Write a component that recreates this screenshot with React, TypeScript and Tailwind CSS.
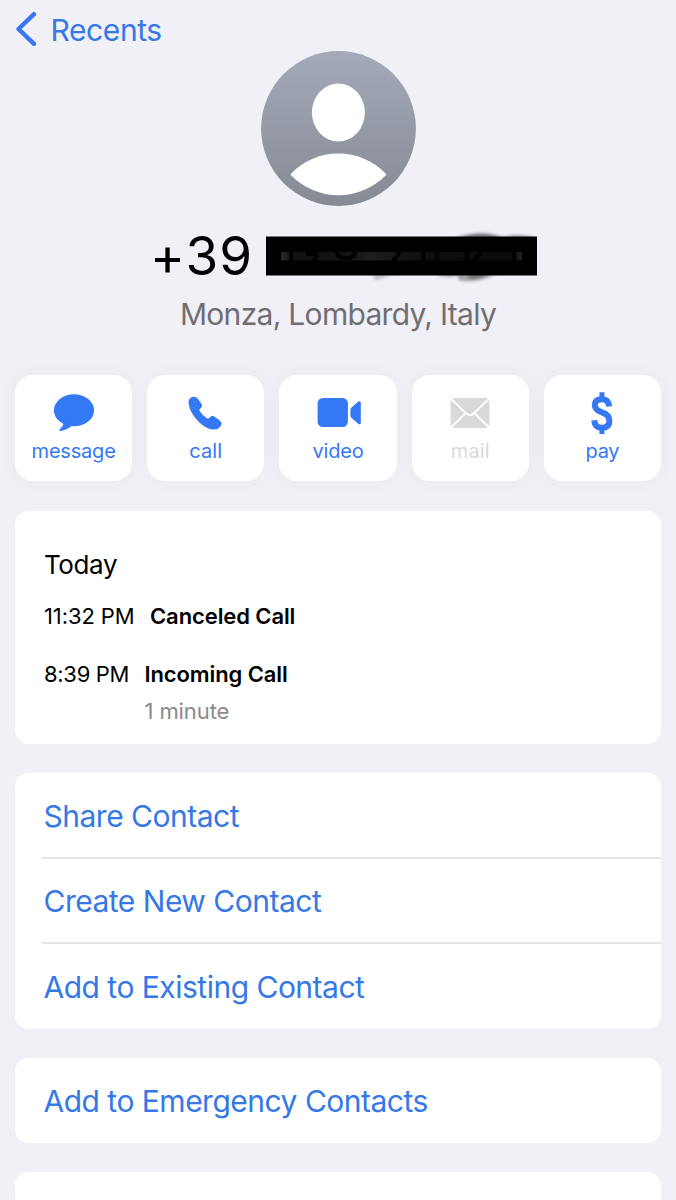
import type { ReactNode } from 'react';
import clsx from 'clsx';

interface ActionButtonProps {
  label: string;
  labelClass?: string;
  disabled?: boolean;
  children: ReactNode;
}

function ActionButton({ label, labelClass, disabled, children }: ActionButtonProps) {
  return (
    <button
      disabled={disabled}
      className={clsx(
        'flex h-[106px] flex-col items-center rounded-[18px] bg-white pt-[14px] shadow-[0_0_20px_rgba(0,0,0,0.035)]',
        disabled ? 'text-[#d9d9d9]' : 'text-[#3578f6]'
      )}
    >
      <svg className="size-12" viewBox="0 0 48 48" fill="currentColor">
        {children}
      </svg>
      <span className={clsx('mt-0.5 text-[20px] leading-6', labelClass)}>{label}</span>
    </button>
  );
}

interface ActionRowProps {
  label: string;
  className?: string;
  divider?: boolean;
}

function ActionRow({ label, className, divider }: ActionRowProps) {
  return (
    <li
      className={clsx(
        'ml-[27px] flex items-center pl-[1.5px]',
        divider && 'border-b-2 border-[#e6e6e7]',
        className
      )}
    >
      <button className="text-[30px] leading-9 tracking-[-0.5px] text-[#3578e6]">{label}</button>
    </li>
  );
}

function Avatar() {
  return (
    <svg className="size-[155px]" viewBox="0 0 155 155">
      <defs>
        <linearGradient id="avatar" x1="0" y1="0" x2="0" y2="1">
          <stop offset="0" stopColor="#a5aab9" />
          <stop offset="1" stopColor="#858a93" />
        </linearGradient>
      </defs>
      <circle cx="77.5" cy="77.5" r="77.4" fill="url(#avatar)" />
      <ellipse cx="77.4" cy="61.5" rx="26.5" ry="29" fill="#fff" />
      <path
        d="M30.2 122.4 A66 66 0 0 1 124.6 122.4 Q125.6 123.4 124.6 124.4 A66 66 0 0 1 30.2 124.4 Q29.2 123.4 30.2 122.4Z"
        fill="#fff"
      />
    </svg>
  );
}

// Blacked out part of the phone number, with the marker strokes around it
function RedactedNumber() {
  return (
    <svg className="h-[60px] w-[280px]" viewBox="0 0 280 60">
      <defs>
        <filter id="smudge" x="-20%" y="-60%" width="140%" height="220%">
          <feGaussianBlur stdDeviation="1.5" />
        </filter>
        <linearGradient id="strip">
          <stop offset="0" stopColor="#2c2c2c" />
          <stop offset="0.05" stopColor="#111" />
          <stop offset="0.3" stopColor="#141414" />
          <stop offset="0.36" stopColor="#1e1e1e" />
          <stop offset="0.6" stopColor="#0e0e0e" />
          <stop offset="0.96" stopColor="#0b0b0b" />
          <stop offset="1" stopColor="#222" />
        </linearGradient>
      </defs>
      <g filter="url(#smudge)">
        <path d="M190 12 Q216 3 238 12Z" fill="#333" opacity=".7" />
        <path d="M234 12 Q254 6 269 12Z" fill="#333" opacity=".5" />
        <path d="M107 48 L128 48 L111 54 Q107 55 108 51Z" fill="#555" opacity=".3" />
        <path d="M172 48 L200 48 Q184 53 172 50Z" fill="#444" opacity=".35" />
        <path d="M190 48 L230 48 Q212 57 196 55 Q190 54 193 51Z" fill="#444" opacity=".45" />
        <path d="M202 48 L224 48 Q210 54 202 52Z" fill="#222" opacity=".4" />
      </g>
      <rect y="10.5" width="271" height="39" fill="#000" />
      <rect x="15" y="26" width="241" height="8.5" fill="url(#strip)" />
      <g fill="none" stroke="#000" strokeWidth="4">
        <path d="M25 26v9M40 28h10q2 3-2 7M71 26q0 6 9 6t9-6" />
        <path d="M134 26l-7 9M157 26v9M171 26v9M201 26v9M215 26l-7 9M248 26v9" />
      </g>
    </svg>
  );
}

export default function App() {
  return (
    <div className="flex h-[1200px] w-full flex-col overflow-hidden bg-[#f1f0f6] font-['Inter','Liberation_Sans',sans-serif] text-black">
      <header className="flex h-[51px] shrink-0 items-center pt-[7px] pl-4 text-[#3578e6]">
        <svg className="h-[34px] w-[20px]" viewBox="0 0 20 34" fill="none">
          <path d="M18 2.2 L2.5 17 L18 31.8" stroke="#3578f6" strokeWidth="4.4" strokeLinecap="round" strokeLinejoin="round" />
        </svg>
        <button className="mt-px ml-[14.5px] text-[30px] leading-9 tracking-[-0.4px]">Recents</button>
      </header>

      <section className="flex shrink-0 flex-col items-center">
        <Avatar />
        <div className="mt-5 flex h-[60px] w-full pl-[150px]">
          <h1 className="w-[116px] text-[53px] leading-[60px] tracking-[1px] whitespace-nowrap">+39</h1>
          <RedactedNumber />
        </div>
        <p className="mt-[10px] text-[30px] leading-9 tracking-[-0.7px] text-[#6f6f73]">Monza, Lombardy, Italy</p>
      </section>

      <main className="px-[15px]">
        <div className="mt-[43px] grid grid-cols-5 gap-[15px]">
          <ActionButton label="message" labelClass="tracking-[-0.2px]">
            <ellipse cx="24" cy="21.3" rx="20.1" ry="16" />
            <path d="M14 33 Q13.5 37 10 40 Q8.6 42.3 11.3 42 Q17 41 22.5 36.5Z" />
          </ActionButton>
          <ActionButton label="call" labelClass="tracking-[0.1px]">
            <path d="M11.4 7.8 Q14 7.2 15.6 9.4 L19.6 15 Q20.7 16.8 19.3 18.4 L17.8 20 Q17 21 17.8 22.3 Q20.6 26.6 25 29.3 Q26 29.9 27 29 L28.8 27.4 Q30.3 26.2 32 27.3 L37.8 31.4 Q40.1 33.2 39.2 36 Q37.5 40.2 32 40.6 Q25.5 40.6 17.6 33.7 Q7.6 24 6.5 14 Q6.3 8.6 11.4 7.8Z" />
          </ActionButton>
          <ActionButton label="video" labelClass="tracking-[-0.2px]">
            <rect x="3.6" y="9" width="30.3" height="29" rx="5.2" />
            <path d="M36.4 20.8 Q36.4 19.6 37.3 18.8 L44.3 12.6 Q46.8 11.2 46.8 14 V33.4 Q46.8 36.4 44.2 34.8 L37.3 28.8 Q36.4 28 36.4 26.8Z" />
          </ActionButton>
          <ActionButton label="mail" labelClass="tracking-[0.1px]" disabled>
            <rect x="4.6" y="9" width="38.8" height="30" rx="2" />
            <g fill="none" stroke="#fff" strokeWidth="2">
              <path d="M4.5 9.2 L20.4 24.6 Q24 27.8 27.6 24.6 L43.5 9.2" />
              <path d="M4.5 39 L19 24.8 M43.5 39 L29 24.8" />
            </g>
          </ActionButton>
          <ActionButton label="pay" labelClass="tracking-[-0.3px]">
            <g fill="none" stroke="currentColor" strokeWidth="6">
              <path d="M31.2 17.6 Q30.6 10.2 23.9 10.2 Q16.8 10.2 16.8 16 Q16.8 21 23.9 23.3 Q31.4 25.6 31.4 32 Q31.4 38.8 23.9 38.8 Q16.8 38.8 16.2 31.2" />
              <path strokeWidth="5" d="M23.9 3.2 V10 M23.9 39 V45" />
            </g>
          </ActionButton>
        </div>

        <section className="mt-[30px] h-[233px] rounded-[14px] bg-white pt-[38px] pl-[29px] text-[22px] leading-7">
          <h2 className="text-[26px] leading-8 tracking-[-0.4px]">Today</h2>
          <div className="mt-[21px] flex">
            <span className="w-[106px] tracking-[-0.1px]">11:32 PM</span>
            <span className="font-semibold tracking-[-0.1px]">Canceled Call</span>
          </div>
          <div className="mt-[30px] flex">
            <span className="w-[100.5px] tracking-[-0.3px]">8:39 PM</span>
            <div>
              <p className="font-semibold tracking-[-0.1px]">Incoming Call</p>
              <p className="mt-[9px] tracking-[-0.1px] text-[#8a8a8e]">1 minute</p>
            </div>
          </div>
        </section>

        <ul className="mt-[29px] rounded-[14px] bg-white">
          <ActionRow label="Share Contact" className="h-[86px] pt-0.5" divider />
          <ActionRow label="Create New Contact" className="h-[85px]" divider />
          <ActionRow label="Add to Existing Contact" className="h-[85px]" />
        </ul>

        <ul className="mt-[29px] rounded-[14px] bg-white">
          <ActionRow label="Add to Emergency Contacts" className="h-[85px]" />
        </ul>

        <div className="mt-[29px] h-[85px] rounded-[14px] bg-white" />
      </main>
    </div>
  );
}
